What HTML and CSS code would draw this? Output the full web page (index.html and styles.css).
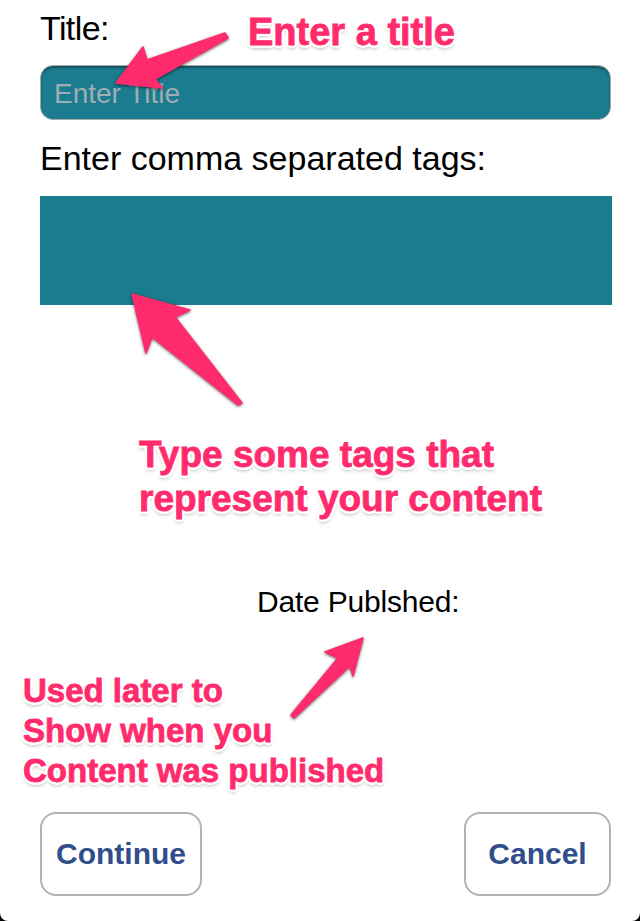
FILE: index.html
```html
<!DOCTYPE html>
<html>
<head>
<meta charset="utf-8">
<link rel="stylesheet" href="styles.css">
</head>
<body>
<div class="screen">
  <div class="label title-label">Title:</div>
  <div class="title-input"><span class="placeholder">Enter Title</span></div>
  <div class="label tags-label">Enter comma separated tags:</div>
  <div class="tags-box"></div>
  <div class="date-row"><span class="date-label">Date Publshed:</span></div>
  <div class="buttons">
    <button class="btn btn-continue">Continue</button>
    <button class="btn btn-cancel">Cancel</button>
  </div>

  <div class="annotations">
    <svg class="arrows" width="640" height="921" viewBox="0 0 640 921">
      <polygon points="116,83 143,47 147,60 225,33 228,38 155,79 162,88" />
      <polygon points="132,294 190,310 175,317 242,403 238,405 152,337 146,353" />
      <polygon points="363,638 353,676 350,666 294,718 291,715 338,658 325,652" />
    </svg>
    <div class="note note-title">Enter a title</div>
    <div class="note note-tags">Type some tags that<br>represent your content</div>
    <div class="note note-date">Used later to<br>Show when you<br>Content was published</div>
  </div>
</div>
</body>
</html>
```

FILE: styles.css
```css
html {
  margin: 0;
  padding: 0;
  background: #000;
}
body {
  margin: 0;
  padding: 0;
  background: #000;
}
.screen {
  position: relative;
  width: 640px;
  height: 921px;
  background: #fff;
  border-radius: 0 0 8px 8px;
  display: flex;
  flex-direction: column;
  padding: 0 0 0 40px;
  box-sizing: border-box;
  font-family: "Liberation Sans", Arial, sans-serif;
  color: #000;
  overflow: hidden;
}
.label {
  font-size: 34px;
  line-height: 40px;
}
.title-label {
  margin-top: 8px;
  letter-spacing: -0.6px;
}
.title-input {
  margin-top: 17px;
  width: 571px;
  height: 55px;
  box-sizing: border-box;
  background: #1b7b8f;
  border: 1.5px solid #a9a9a9;
  border-radius: 13px;
  box-shadow: inset 0 2px 2px rgba(0, 0, 0, 0.35);
  display: flex;
  align-items: center;
  padding-left: 13px;
  padding-top: 2px;
}
.placeholder {
  font-size: 28px;
  color: #9eaeb2;
}
.tags-label {
  margin-top: 18px;
}
.tags-box {
  margin-top: 18px;
  width: 572px;
  height: 109px;
  background: #1b7b8f;
}
.date-row {
  margin-top: 279px;
  padding-left: 217px;
  height: 36px;
  font-size: 30px;
  line-height: 36px;
}
.date-label {
  letter-spacing: -0.2px;
}
.buttons {
  margin-top: 192px;
  width: 571px;
  display: flex;
  justify-content: space-between;
}
.btn {
  height: 84px;
  background: #fff;
  border: 2px solid #b3b3b3;
  border-radius: 16px;
  font-family: "Liberation Sans", Arial, sans-serif;
  font-weight: bold;
  font-size: 30px;
  color: #2f4e8b;
  padding: 0;
  margin: 0;
}
.btn-continue {
  width: 162px;
}
.btn-cancel {
  width: 147px;
}
.annotations {
  position: absolute;
  left: 0;
  top: 0;
  width: 640px;
  height: 921px;
  pointer-events: none;
}
.arrows {
  position: absolute;
  left: 0;
  top: 0;
}
.arrows polygon {
  fill: #ff2b6d;
  stroke: #ff2b6d;
  stroke-width: 1.5;
  stroke-linejoin: round;
  filter: drop-shadow(0 1.5px 1.5px rgba(0, 0, 0, 0.6));
}
.note {
  position: absolute;
  font-family: "Liberation Sans", Arial, sans-serif;
  font-weight: bold;
  color: #ff2b6d;
  -webkit-text-stroke: 0.8px #ff2b6d;
  white-space: nowrap;
  letter-spacing: 0;
  text-shadow:
    2px 0 0 #fff, -2px 0 0 #fff, 0 2px 0 #fff, 0 -2px 0 #fff,
    1.5px 1.5px 0 #fff, -1.5px 1.5px 0 #fff, 1.5px -1.5px 0 #fff, -1.5px -1.5px 0 #fff,
    3px 0 0 #fff, -3px 0 0 #fff, 0 3px 0 #fff, 0 -3px 0 #fff,
    2.2px 2.2px 0 #fff, -2.2px 2.2px 0 #fff, 2.2px -2.2px 0 #fff, -2.2px -2.2px 0 #fff,
    0 3px 4px rgba(0, 0, 0, 0.4);
}
.note-title {
  left: 248px;
  top: 10px;
  font-size: 38px;
  line-height: 44px;
}
.note-tags {
  left: 139px;
  top: 433px;
  font-size: 37px;
  line-height: 44px;
}
.note-date {
  left: 23px;
  top: 671px;
  font-size: 33px;
  line-height: 40px;
}
```
